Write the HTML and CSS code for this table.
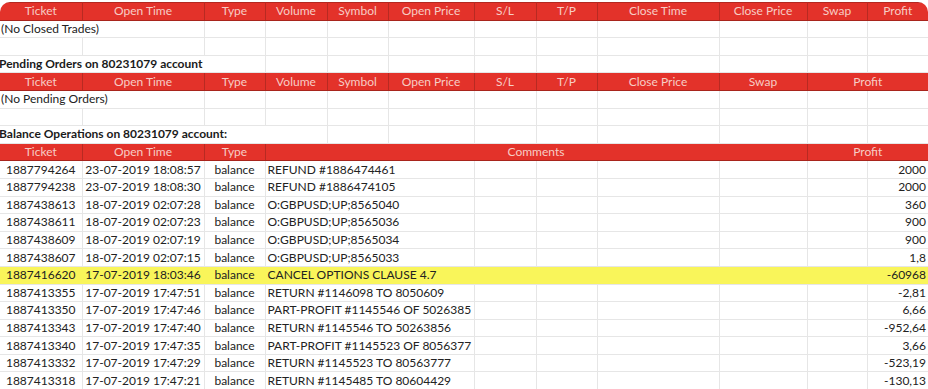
FILE: index.html
```html
<!DOCTYPE html>
<html>
<head>
<meta charset="utf-8">
<link rel="stylesheet" href="styles.css">
</head>
<body>
<div class="sheet">
<table class="grid">
<colgroup>
<col class="c82"><col class="c122"><col class="c61"><col class="c62"><col class="c61"><col class="c86"><col class="c62"><col class="c61"><col class="c122"><col class="c88"><col class="c60"><col class="c61">
</colgroup>
<tbody>
<tr class="hd"><th>Ticket</th><th>Open Time</th><th>Type</th><th>Volume</th><th>Symbol</th><th>Open Price</th><th>S/L</th><th>T/P</th><th>Close Time</th><th>Close Price</th><th>Swap</th><th>Profit</th></tr>
<tr><td colspan="2" class="note">(No Closed Trades)</td><td></td><td></td><td></td><td></td><td></td><td></td><td></td><td></td><td></td><td></td></tr>
<tr><td></td><td></td><td></td><td></td><td></td><td></td><td></td><td></td><td></td><td></td><td></td><td></td></tr>
<tr><td colspan="3" class="title">Pending Orders on 80231079 account</td><td></td><td></td><td></td><td></td><td></td><td></td><td></td><td></td><td></td></tr>
<tr class="hd"><th>Ticket</th><th>Open Time</th><th>Type</th><th>Volume</th><th>Symbol</th><th>Open Price</th><th>S/L</th><th>T/P</th><th>Close Price</th><th>Swap</th><th colspan="2">Profit</th></tr>
<tr><td colspan="2" class="note">(No Pending Orders)</td><td></td><td></td><td></td><td></td><td></td><td></td><td></td><td></td><td></td><td></td></tr>
<tr><td></td><td></td><td></td><td></td><td></td><td></td><td></td><td></td><td></td><td></td><td></td><td></td></tr>
<tr><td colspan="4" class="title">Balance Operations on 80231079 account:</td><td></td><td></td><td></td><td></td><td></td><td></td><td></td><td></td></tr>
<tr class="hd"><th>Ticket</th><th>Open Time</th><th>Type</th><th colspan="7">Comments</th><th colspan="2">Profit</th></tr>
<tr><td class="ctr">1887794264</td><td class="ctr">23-07-2019 18:08:57</td><td class="ctr">balance</td><td colspan="3" class="cm">REFUND #1886474461</td><td></td><td></td><td></td><td></td><td></td><td class="num">2000</td></tr>
<tr><td class="ctr">1887794238</td><td class="ctr">23-07-2019 18:08:30</td><td class="ctr">balance</td><td colspan="3" class="cm">REFUND #1886474105</td><td></td><td></td><td></td><td></td><td></td><td class="num">2000</td></tr>
<tr><td class="ctr">1887438613</td><td class="ctr">18-07-2019 02:07:28</td><td class="ctr">balance</td><td colspan="3" class="cm">O:GBPUSD;UP;8565040</td><td></td><td></td><td></td><td></td><td></td><td class="num">360</td></tr>
<tr><td class="ctr">1887438611</td><td class="ctr">18-07-2019 02:07:23</td><td class="ctr">balance</td><td colspan="3" class="cm">O:GBPUSD;UP;8565036</td><td></td><td></td><td></td><td></td><td></td><td class="num">900</td></tr>
<tr><td class="ctr">1887438609</td><td class="ctr">18-07-2019 02:07:19</td><td class="ctr">balance</td><td colspan="3" class="cm">O:GBPUSD;UP;8565034</td><td></td><td></td><td></td><td></td><td></td><td class="num">900</td></tr>
<tr><td class="ctr">1887438607</td><td class="ctr">18-07-2019 02:07:15</td><td class="ctr">balance</td><td colspan="3" class="cm">O:GBPUSD;UP;8565033</td><td></td><td></td><td></td><td></td><td></td><td class="num">1,8</td></tr>
<tr class="hl"><td class="ctr">1887416620</td><td class="ctr">17-07-2019 18:03:46</td><td class="ctr">balance</td><td colspan="8" class="cm">CANCEL OPTIONS CLAUSE 4.7</td><td class="num">-60968</td></tr>
<tr><td class="ctr">1887413355</td><td class="ctr">17-07-2019 17:47:51</td><td class="ctr">balance</td><td colspan="3" class="cm">RETURN #1146098 TO 8050609</td><td></td><td></td><td></td><td></td><td></td><td class="num">-2,81</td></tr>
<tr><td class="ctr">1887413350</td><td class="ctr">17-07-2019 17:47:46</td><td class="ctr">balance</td><td colspan="3" class="cm">PART-PROFIT #1145546 OF 5026385</td><td></td><td></td><td></td><td></td><td></td><td class="num">6,66</td></tr>
<tr><td class="ctr">1887413343</td><td class="ctr">17-07-2019 17:47:40</td><td class="ctr">balance</td><td colspan="3" class="cm">RETURN #1145546 TO 50263856</td><td></td><td></td><td></td><td></td><td></td><td class="num">-952,64</td></tr>
<tr><td class="ctr">1887413340</td><td class="ctr">17-07-2019 17:47:35</td><td class="ctr">balance</td><td colspan="3" class="cm">PART-PROFIT #1145523 OF 8056377</td><td></td><td></td><td></td><td></td><td></td><td class="num">3,66</td></tr>
<tr><td class="ctr">1887413332</td><td class="ctr">17-07-2019 17:47:29</td><td class="ctr">balance</td><td colspan="3" class="cm">RETURN #1145523 TO 80563777</td><td></td><td></td><td></td><td></td><td></td><td class="num">-523,19</td></tr>
<tr><td class="ctr">1887413318</td><td class="ctr">17-07-2019 17:47:21</td><td class="ctr">balance</td><td colspan="3" class="cm">RETURN #1145485 TO 80604429</td><td></td><td></td><td></td><td></td><td></td><td class="num">-130,13</td></tr>
</tbody>
</table>
</div>
</body>
</html>
```
FILE: styles.css
```css
html, body {
  margin: 0;
  padding: 0;
  background: #ffffff;
}
body {
  width: 928px;
  height: 389px;
  overflow: hidden;
  font-family: Lato, "Open Sans", sans-serif;
  font-size: 12px;
  color: #222222;
}
.sheet {
  margin-top: 2px;
  border-radius: 10px 10px 0 0;
  overflow: hidden;
  width: 928px;
}
.grid {
  width: 928px;
  table-layout: fixed;
  border-collapse: collapse;
}
.c82 { width: 82px; }
.c122 { width: 122px; }
.c61 { width: 61px; }
.c62 { width: 62px; }
.c86 { width: 86px; }
.c88 { width: 88px; }
.c60 { width: 60px; }
.grid td {
  padding: 0 2px;
  height: 16.6px;
  border: 1px solid #e6e6e6;
  white-space: nowrap;
  overflow: visible;
  line-height: 14px;
}
.grid td:first-child { border-left: none; }
.grid td:last-child { border-right: none; }
.grid th {
  padding: 0;
  height: 16.6px;
  background: #e3322a;
  color: #f7cdc5;
  font-weight: 400;
  text-align: center;
  border-top: 1px solid #b42820;
  border-bottom: 1px solid #a8241c;
  border-right: 1px solid #b82a22;
  line-height: 14px;
}
.grid th:last-child { border-right: none; }
.note {
  padding-left: 0;
  text-indent: -1px;
}
.title {
  font-weight: 700;
  color: #1a1a1a;
  text-indent: -3px;
  padding-left: 0;
}
.ctr { text-align: center; }
.cm { text-align: left; }
.num { text-align: right; }
.hl td {
  background: #f9f55a;
  border-left-color: #f9f55a;
  border-right-color: #f9f55a;
}
```
